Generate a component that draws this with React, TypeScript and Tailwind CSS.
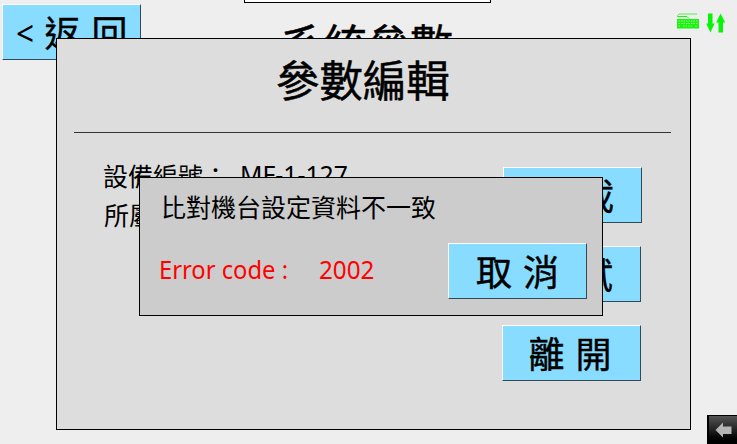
import type { ReactNode } from "react";

const cjk = "font-['Noto_Sans_CJK_TC','Noto_Sans_CJK_SC',sans-serif]";
const latin = "font-['Noto_Sans','Noto_Sans_CJK_TC',sans-serif]";

function PanelButton({ children, className = "" }: { children: ReactNode; className?: string }) {
  return (
    <button
      className={`flex h-14 w-[139px] shrink-0 items-center justify-center whitespace-pre border border-t-white border-l-white border-r-[#334a56] border-b-[#334a56] bg-[#88dcff] pb-[3px] text-[36px] leading-none text-black [word-spacing:3px] [-webkit-text-stroke:0.4px_black] ${cjk} ${className}`}
    >
      {children}
    </button>
  );
}

function KeyboardIcon() {
  return (
    <svg width="22" height="16" viewBox="0 0 22 16" fill="none" aria-hidden="true">
      <path d="M0.5 4V2.5L2 1H20" stroke="#55ee4c" strokeWidth="1" />
      <path d="M1 3.5H10L12 5.5" stroke="#18f50c" strokeWidth="1" />
      <path d="M0 6H22V15.5H0Z" fill="#18f50c" />
      <path d="M1.5 8H21M1.5 10.5H21M1.5 13H4M6 13H16M18 13H21" stroke="#d8f5d5" strokeWidth="0.7" strokeDasharray="1.5 1" />
    </svg>
  );
}

function TransferIcon() {
  return (
    <svg width="20" height="20" viewBox="0 0 20 20" fill="#05f605" aria-hidden="true">
      <path d="M2 0.5H6.5V10.5H8.5L4.5 19.5L0.2 10.5H2Z" />
      <path d="M14.5 0.5L19.2 9.5H17V19.5H12.5V9.5H10.2Z" />
    </svg>
  );
}

function ErrorDialog() {
  return (
    <section className="absolute left-[139px] top-[177px] h-[139px] w-[464px] border border-black bg-[#cccccc] pl-[21px] pt-[14px] pr-[15px]">
      <p className={`h-7 whitespace-nowrap text-[25px] leading-7 ${cjk}`}>比對機台設定資料不一致</p>
      <div className="mt-[23px] flex justify-between">
        <div className={`-ml-0.5 flex pt-2 text-[25px] leading-9 text-[#ff0000] ${latin}`}>
          <span className="w-[160px] whitespace-nowrap">
            <span className="inline-block origin-left scale-x-[0.95]">Error code :</span>
          </span>
          <span className="inline-block origin-left scale-x-[0.97]">2002</span>
        </div>
        <PanelButton>取 消</PanelButton>
      </div>
    </section>
  );
}

function EditDialog() {
  return (
    <section className="absolute left-14 top-[38px] h-[392px] w-[635px] border border-black bg-[#dddddd]">
      <h2 className={`mt-[17px] ml-[219px] h-11 text-[43.4px] leading-[44px] [-webkit-text-stroke:0.5px_black] ${cjk}`}>參數編輯</h2>
      <div className="mx-[17px] mt-[32px] h-px w-[597px] bg-[#333333]" />
      <div className="mt-[23px] ml-[46px] flex">
        <dl className={`w-[399px] text-[25px] leading-[39px] ${cjk}`}>
          <div className="flex h-[39px]">
            <dt className="w-[137px] whitespace-nowrap">設備編號：</dt>
            <dd className={`-mt-px whitespace-nowrap ${latin}`}>
              <span className="inline-block origin-left scale-x-[0.99]">MF-1-127</span>
            </dd>
          </div>
          <div className="ml-px flex h-[39px]"><dt className="whitespace-nowrap">所屬區域：</dt></div>
        </dl>
        <div className="mt-[11px] flex flex-col gap-[23px]">
          <PanelButton className="ml-px">下 載</PanelButton>
          <PanelButton>測 試</PanelButton>
          <PanelButton className="pr-[3px]">離 開</PanelButton>
        </div>
      </div>
    </section>
  );
}

export default function App() {
  return (
    <main className="relative h-[444px] w-[737px] overflow-hidden bg-[#eeeeee] text-black">
      <header className="flex h-16 items-start">
        <div className="w-[244px] pt-1 pl-0.5">
          <PanelButton className="pr-px">
            <span className={`mr-[10px] pt-[3px] text-[35px] [-webkit-text-stroke:0px] ${latin}`}>
              <span className="inline-block origin-right scale-x-90">{"<"}</span>
            </span>
            {"返 回"}
          </PanelButton>
        </div>
        <div className="w-[247px]">
          <div className="h-[3px] border border-t-0 border-black bg-white" />
          <h1 className={`mt-[17px] ml-[37px] text-[43px] leading-[44px] [-webkit-text-stroke:0.5px_black] ${cjk}`}>系統參數</h1>
        </div>
        <div className="ml-auto flex gap-[7px] pt-[13px] pr-[11px]">
          <KeyboardIcon />
          <TransferIcon />
        </div>
      </header>
      <EditDialog />
      <ErrorDialog />
      <button className="absolute right-0 bottom-0 flex h-[29px] w-[30px] items-center justify-center border-t border-l-2 border-black bg-linear-to-b from-[#555555] via-[#222222] to-black" aria-label="Previous">
        <svg width="17" height="16" viewBox="0 0 17 16" aria-hidden="true">
          <path d="M0.5 8L8 0.5V4.5H16.5V12H8V15.5Z" fill="#b4b4b4" />
        </svg>
      </button>
    </main>
  );
}
